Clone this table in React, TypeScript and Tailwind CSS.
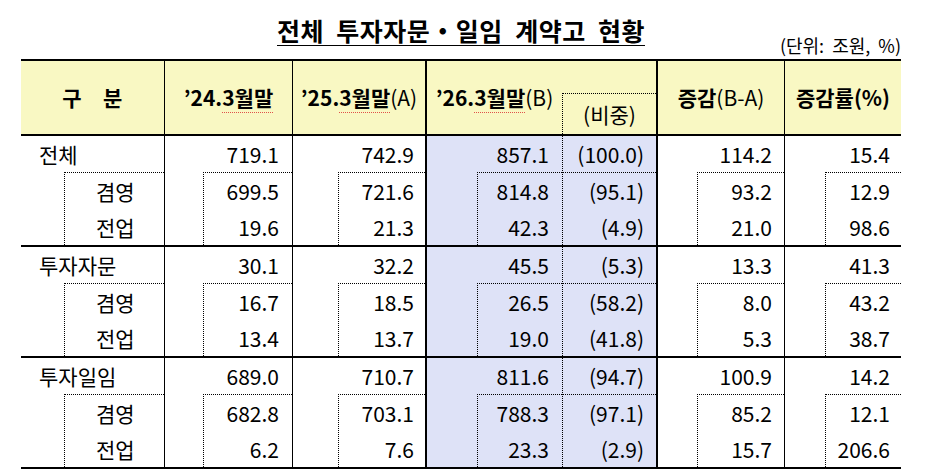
import React from "react";

type Col = { w: string; line: string; inset: string; pr: string; bg: string };

const COLS: Col[] = [
  { w: "w-[143px]", line: "", inset: "ml-[43px]", pr: "", bg: "" },
  { w: "w-[128px]", line: "border-l border-black", inset: "ml-[38px]", pr: "pr-[13px]", bg: "" },
  { w: "w-[133px]", line: "border-l border-black", inset: "ml-[45px]", pr: "pr-[11px]", bg: "" },
  { w: "w-[137px]", line: "border-l-2 border-black", inset: "ml-[50px]", pr: "pr-[13px]", bg: "bg-[#dee2f7]" },
  { w: "w-[94px]", line: "border-l border-dotted border-black", inset: "", pr: "pr-[12px]", bg: "bg-[#dee2f7]" },
  { w: "w-[128px]", line: "border-l-2 border-black", inset: "ml-[39px]", pr: "pr-[12px]", bg: "" },
  { w: "w-[117px]", line: "border-l border-black", inset: "ml-[40px]", pr: "pr-[11px]", bg: "" },
];

type Group = { label: string; rows: string[][] };

const GROUPS: Group[] = [
  {
    label: "전체",
    rows: [
      ["719.1", "742.9", "857.1", "(100.0)", "114.2", "15.4"],
      ["699.5", "721.6", "814.8", "(95.1)", "93.2", "12.9"],
      ["19.6", "21.3", "42.3", "(4.9)", "21.0", "98.6"],
    ],
  },
  {
    label: "투자자문",
    rows: [
      ["30.1", "32.2", "45.5", "(5.3)", "13.3", "41.3"],
      ["16.7", "18.5", "26.5", "(58.2)", "8.0", "43.2"],
      ["13.4", "13.7", "19.0", "(41.8)", "5.3", "38.7"],
    ],
  },
  {
    label: "투자일임",
    rows: [
      ["689.0", "710.7", "811.6", "(94.7)", "100.9", "14.2"],
      ["682.8", "703.1", "788.3", "(97.1)", "85.2", "12.1"],
      ["6.2", "7.6", "23.3", "(2.9)", "15.7", "206.6"],
    ],
  },
];

const SUB = ["겸영", "전업"];

function Squiggle({ children }: { children: React.ReactNode }) {
  return <span className="border-b border-dotted border-[#e0524a]">{children}</span>;
}

function Header() {
  return (
    <div className="flex h-[75px] border-b-2 border-black bg-[#f9f8c3] text-[21px] leading-none">
      <div className="w-[143px] flex items-center justify-center font-bold tracking-[0.4em] pl-[8px]">구 분</div>
      <div className="w-[128px] border-l border-black flex items-center justify-center font-bold">
        <span>’24.<Squiggle>3월말</Squiggle></span>
      </div>
      <div className="w-[133px] border-l border-black flex items-center justify-center">
        <span className="font-bold">’25.<Squiggle>3월말</Squiggle></span>
        <span>(A)</span>
      </div>
      <div className="w-[137px] border-l-2 border-black flex items-center justify-center">
        <span className="font-bold">’26.<Squiggle>3월말</Squiggle></span>
        <span>(B)</span>
      </div>
      <div className="w-[94px] flex flex-col">
        <div className="h-[32px]" />
        <div className="flex-1 border-l border-t border-dotted border-black flex items-center justify-center">(비중)</div>
      </div>
      <div className="w-[128px] border-l-2 border-black flex items-center justify-center">
        <span className="font-bold">증감</span>
        <span>(B-A)</span>
      </div>
      <div className="w-[117px] border-l border-black flex items-center justify-center font-bold">증감률(%)</div>
    </div>
  );
}

function GroupRows({ g }: { g: Group }) {
  return (
    <div className="flex h-[111px] border-b-2 border-black text-[21px] leading-none">
      {COLS.map((c, ci) => {
        const first = ci === 0;
        const vals = g.rows.map((r) => (first ? "" : r[ci - 1]));
        return (
          <div key={ci} className={`${c.w} ${c.line} ${c.bg} flex flex-col`}>
            <div className={`h-[37px] flex items-center ${first ? "pl-[18px]" : `justify-end ${c.pr}`}`}>
              {first ? g.label : vals[0]}
            </div>
            <div className={`flex-1 ${c.inset} border-t border-dotted border-black ${ci === 4 ? "" : "border-l"} flex flex-col`}>
              {[1, 2].map((ri) => (
                <div key={ri} className={`h-[36px] flex items-center ${first ? "pl-[31px]" : `justify-end ${c.pr}`}`}>
                  {first ? SUB[ri - 1] : vals[ri]}
                </div>
              ))}
            </div>
          </div>
        );
      })}
    </div>
  );
}

export default function App() {
  return (
    <div className="w-[936px] h-[475px] bg-white text-black font-['Noto_Sans_CJK_KR','Noto_Sans',sans-serif]">
      <div className="ml-[21px] w-[880px] h-[59px] grid grid-cols-[1fr_auto_1fr] items-end">
        <div />
        <div className="pb-[13px]">
          <h1 className="text-[25px] leading-[28px] font-bold border-b border-black tracking-[0.02em] pb-[1px]">
            전체&nbsp; 투자자문・일임&nbsp; 계약고&nbsp; 현황
          </h1>
        </div>
        <div className="justify-self-end pb-[3px] text-[18px] leading-[22px] whitespace-pre">(단위:  조원,  %)</div>
      </div>
      <div className="ml-[21px] w-[880px] border-t-2 border-black">
        <Header />
        {GROUPS.map((g) => (
          <GroupRows key={g.label} g={g} />
        ))}
      </div>
    </div>
  );
}
